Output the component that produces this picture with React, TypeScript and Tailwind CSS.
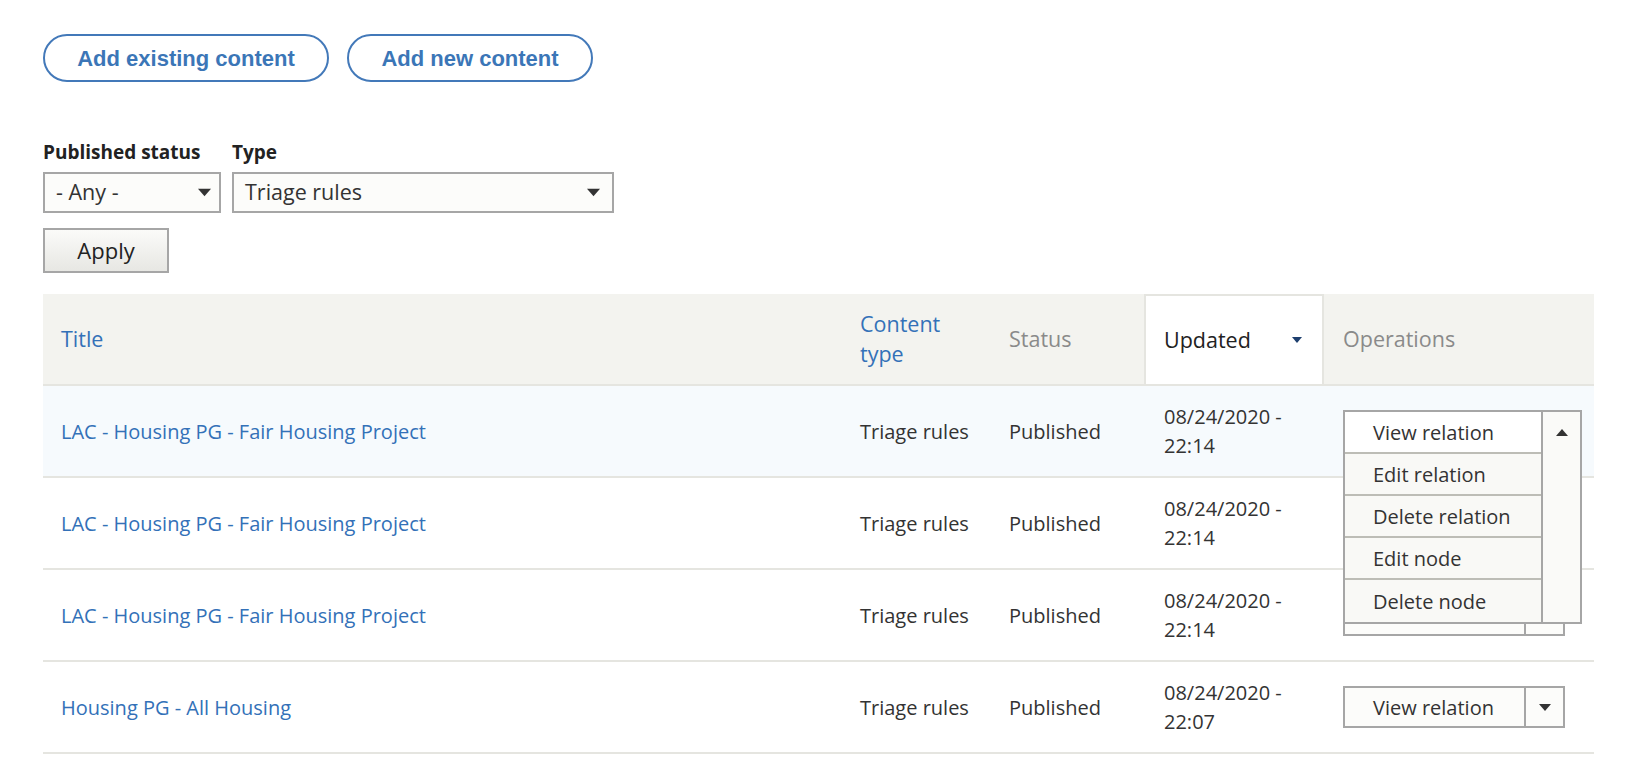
const rows = [
  { title: 'LAC - Housing PG - Fair Housing Project', type: 'Triage rules', status: 'Published', date: '08/24/2020 -', time: '22:14' },
  { title: 'LAC - Housing PG - Fair Housing Project', type: 'Triage rules', status: 'Published', date: '08/24/2020 -', time: '22:14' },
  { title: 'LAC - Housing PG - Fair Housing Project', type: 'Triage rules', status: 'Published', date: '08/24/2020 -', time: '22:14' },
  { title: 'Housing PG - All Housing', type: 'Triage rules', status: 'Published', date: '08/24/2020 -', time: '22:07' },
]

const menuItems = ['View relation', 'Edit relation', 'Delete relation', 'Edit node', 'Delete node']

function Caret({ up = false, className = '' }: { up?: boolean; className?: string }) {
  return (
    <svg width="12" height="7" viewBox="0 0 12 7" className={className}>
      {up ? <path d="M0 7 L6 0 L12 7 Z" fill="currentColor" /> : <path d="M0 0 L12 0 L6 7 Z" fill="currentColor" />}
    </svg>
  )
}

function Dropbutton() {
  return (
    <div className="flex h-[42px] w-fit border-2 border-[#a6a6a6] bg-[#fcfcfa]">
      <span className="flex w-[179px] items-center pl-[28px] text-[20px] text-[#333]">View relation</span>
      <span className="flex w-[39px] items-center justify-center border-l-2 border-[#a6a6a6] text-[#333]">
        <Caret />
      </span>
    </div>
  )
}

function OpenDropbutton() {
  return (
    <div className="relative h-[42px]">
      <div className="absolute left-0 top-0 z-10 flex w-fit border-2 border-[#a6a6a6] bg-[#fafaf8]">
        <ul className="w-[196px]">
          {menuItems.map((item, i) => (
            <li
              key={item}
              className={`flex h-[42px] items-center pl-[28px] text-[20px] text-[#333] ${
                i === 0 ? 'bg-white' : 'bg-[#f9f9f6]'
              } ${i < menuItems.length - 1 ? 'border-b-2 border-[#bdbdb6]' : 'h-[40px]'}`}
            >
              {item}
            </li>
          ))}
        </ul>
        <div className="flex w-[39px] justify-center border-l-2 border-[#a6a6a6] pt-[17px] text-[#333]">
          <Caret up className="h-[7px]" />
        </div>
      </div>
    </div>
  )
}

export default function App() {
  return (
    <div className="min-h-screen bg-white pl-[43px] pt-[34px] font-['Open_Sans',sans-serif] text-[#222330]">
      {/* Action buttons */}
      <div className="flex gap-[18px]">
        {['Add existing content', 'Add new content'].map((label) => (
          <button
            key={label}
            className="h-[48px] rounded-full border-2 border-[#4379b9] font-['Liberation_Sans',Arial,sans-serif] text-[22px] font-bold text-[#3b76b7]"
            style={{ width: label === 'Add existing content' ? 286 : 246 }}
          >
            {label}
          </button>
        ))}
      </div>

      {/* Filters */}
      <div className="mt-[58px] flex gap-[11px]">
        <div>
          <div className="mb-[8px] text-[19px] font-bold leading-[24px] text-[#222]">Published status</div>
          <div className="flex h-[41px] w-[178px] items-center justify-between border-2 border-[#a6a6a6] bg-[#fcfcfa] pl-[11px] pr-[8px] text-[21.5px] text-[#333]">
            <span>- Any -</span>
            <Caret className="h-[9px] w-[13px]" />
          </div>
        </div>
        <div>
          <div className="mb-[8px] text-[19px] font-bold leading-[24px] text-[#222]">Type</div>
          <div className="flex h-[41px] w-[382px] items-center justify-between border-2 border-[#a6a6a6] bg-[#fcfcfa] pl-[11px] pr-[12px] text-[21.5px] text-[#333]">
            <span>Triage rules</span>
            <Caret className="h-[9px] w-[13px]" />
          </div>
        </div>
      </div>
      <button className="mt-[15px] h-[45px] w-[126px] border-2 border-[#a6a6a6] bg-gradient-to-b from-[#fbfbf9] to-[#e7e7e3] text-[22px] text-[#222]">
        Apply
      </button>

      {/* Table */}
      <div className="mt-[21px] w-[1551px] text-[20px]">
        <div className="grid h-[92px] grid-cols-[799px_149px_153px_180px_1fr] border-b-2 border-[#e5e5e0] bg-[#f3f3ef] text-[21.5px] leading-[30px]">
          <div className="flex items-center pl-[18px] text-[#3371b8]">Title</div>
          <div className="flex items-center pl-[18px] text-[#3371b8]">
            <span>
              Content
              <br />
              type
            </span>
          </div>
          <div className="flex items-center pl-[18px] text-[#8a8a8a]">Status</div>
          <div className="flex items-center justify-between border-x-2 border-t-2 border-[#e5e5e0] bg-white pl-[18px] pr-[20px] text-[#222]">
            <span>Updated</span>
            <Caret className="h-[6px] w-[10px] text-[#1d3f6e]" />
          </div>
          <div className="flex items-center pl-[19px] text-[#8a8a8a]">Operations</div>
        </div>

        {rows.map((row, i) => (
          <div
            key={i}
            className={`grid h-[92px] grid-cols-[799px_149px_153px_180px_1fr] border-b-2 border-[#e5e5e0] leading-[29px] ${
              i === 0 ? 'bg-[#f6fafd]' : 'bg-white'
            }`}
          >
            <div className="flex items-center pl-[18px] text-[#3371b8]">{row.title}</div>
            <div className="flex items-center pl-[18px] text-[#333]">{row.type}</div>
            <div className="flex items-center pl-[18px] text-[#333]">{row.status}</div>
            <div className="flex items-center pl-[20px] text-[#333]">
              <span>
                {row.date}
                <br />
                {row.time}
              </span>
            </div>
            <div className="flex items-center pl-[19px]">{i === 0 ? <OpenDropbutton /> : <Dropbutton />}</div>
          </div>
        ))}
      </div>
    </div>
  )
}
